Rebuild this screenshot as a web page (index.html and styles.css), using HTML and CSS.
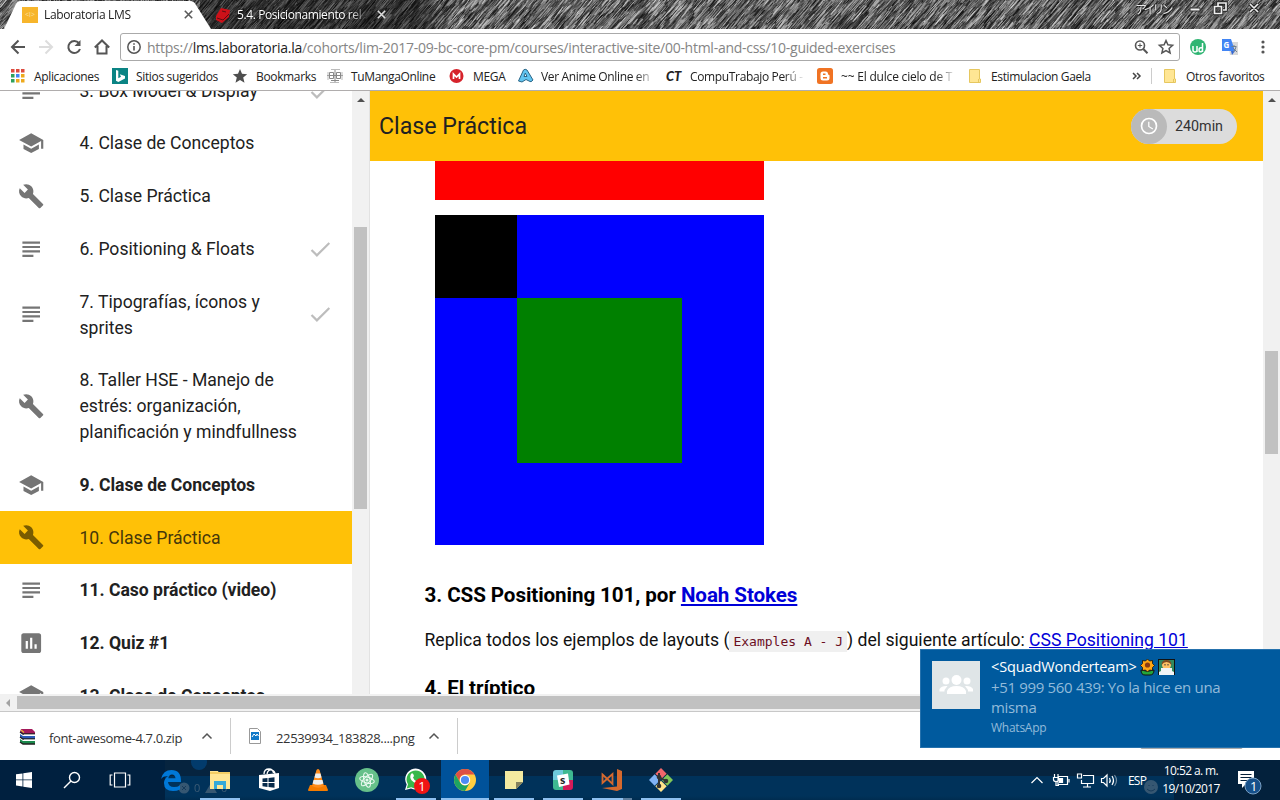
FILE: index.html
```html
<!DOCTYPE html>
<html lang="es">
<head>
<meta charset="utf-8">
<title>Laboratoria LMS</title>
<link rel="stylesheet" href="styles.css">
</head>
<body>
<svg class="defs" width="0" height="0">
  <symbol id="school" viewBox="0 0 24 24"><path d="M5 13.180v4L12 21l7-3.820v-4L12 17l-7-3.820zM12 3L1 9l11 6 9-4.910V17h2V9L12 3z"/></symbol>
  <symbol id="build" viewBox="0 0 24 24"><path d="M22.700 19l-9.100-9.100c.9-2.300.4-5-1.500-6.900-2-2-5-2.400-7.400-1.300L9 6 6 9 1.600 4.700C.4 7.100.9 10.100 2.900 12.100c1.900 1.900 4.600 2.400 6.900 1.500l9.100 9.100c.4.4 1 .4 1.400 0l2.300-2.300c.5-.4.5-1.100.1-1.400z"/></symbol>
  <symbol id="subject" viewBox="0 0 24 24"><path d="M14 17H4v2h10v-2zm6-8H4v2h16V9zM4 15h16v-2H4v2zM4 5v2h16V5H4z"/></symbol>
  <symbol id="poll" viewBox="0 0 24 24"><path d="M19 3H5c-1.100 0-2 .9-2 2v14c0 1.100.9 2 2 2h14c1.100 0 2-.9 2-2V5c0-1.100-.9-2-2-2zM9 17H7v-7h2v7zm4 0h-2V7h2v10zm4 0h-2v-4h2v4z"/></symbol>
  <symbol id="done" viewBox="0 0 24 24"><path d="M9 16.200L4.800 12l-1.400 1.400L9 19 21 7l-1.400-1.400L9 16.200z"/></symbol>
  <symbol id="folder" viewBox="0 0 16 16"><path d="M1.500 1.500h10v9.500h1v3.500h-11z" fill="#ffe694" stroke="#e6c75f"/><path d="M10.500 11v3.500" stroke="#e6c75f" fill="none"/></symbol>
</svg>

<header class="browser">
  <div class="tabstrip">
    <canvas class="theme" id="theme" width="1280" height="29"></canvas>
    <div class="tabs">
      <div class="tab">
        <svg class="tabshape" width="214" height="29"><path d="M4 29L16 4q1.500-3 4-3H190q4 0 6 4L211 29z" fill="#fff"/></svg>
        <span class="fav">&lt;l&gt;</span><span class="tabtext">Laboratoria LMS</span>
        <svg class="x1" width="9" height="9"><path d="M.8.8l7.400 7.400M8.200.8L.8 8.200" stroke="#5a5a5a" stroke-width="1.600"/></svg>
      </div>
      <div class="tab second">
        <svg width="16" height="16"><path d="M1 9L6 1l9 2-1 7-7 6-6-3z" fill="#ce1119"/><path d="M2 11l6 2 6-6M7 4l4 1" stroke="#5c0d12" fill="none"/></svg>
        <span class="tabtext">5.4. Posicionamiento rel</span>
        <svg class="x2" width="9" height="9"><path d="M.8.8l7.400 7.400M8.200.8L.8 8.200" stroke="#ddd" stroke-width="1.600"/></svg>
      </div>
    </div>
    <div class="wincontrols">
      <span class="jp">アイリン</span>
      <svg width="104" height="18"><g fill="none" stroke="#777" stroke-opacity=".7"><path d="M8 0v14M33 0v14M58 0v14M102 0v14M8 14h94"/></g><path d="M14 8h10v3H14z" fill="#eee" stroke="#333"/><g fill="none" stroke="#222" stroke-width="3.500"><path d="M38.500 6.500h7v7h-7zM42 6V3h8v7h-3M74 4l8 8M82 4l-8 8"/></g><g fill="none" stroke="#eee" stroke-width="1.700"><path d="M38.500 6.500h7v7h-7zM42 6V3h8v7h-3M74 4l8 8M82 4l-8 8"/></g></svg>
    </div>
  </div>
  <div class="toolbar">
    <svg class="nav" width="118" height="34" fill="none" stroke="#555" stroke-width="2"><path d="M25 18H12M18.500 11.500L12 18l6.500 6.500"/><path d="M39 18h13M45.500 11.500L52 18l-6.500 6.500" stroke="#ddd"/><path d="M79 14.200A6 6 0 1 0 80 20"/><path d="M80.500 11v6h-6z" fill="#555" stroke="none"/><path d="M94.800 18.500L102 11.500l7.200 7M97.500 17v7.500h9V17"/></svg>
    <div class="omnibox">
      <svg width="16" height="16"><circle cx="8" cy="8" r="6.200" fill="none" stroke="#555" stroke-width="1.500"/><path d="M7.200 7h1.600v4.500H7.200zM7.200 4.300h1.600v1.500H7.200z" fill="#555"/></svg>
      <span class="url">https://<b>lms.laboratoria.la</b>/cohorts/lim-2017-09-bc-core-pm/courses/interactive-site/00-html-and-css/10-guided-exercises</span>
      <svg class="omniicons" width="42" height="18" fill="none" stroke="#555"><circle cx="7" cy="7.500" r="4.500" stroke-width="1.600"/><path d="M10.300 11l4.200 4.200" stroke-width="2"/><path d="M4.800 7.500h4.400M7 5.300v4.400"/><path d="M33 2.500l1.900 4.300 4.700.5-3.500 3.100 1 4.600-4.100-2.400-4.100 2.400 1-4.600-3.500-3.100 4.700-.5z" stroke-width="1.500"/></svg>
    </div>
    <div class="ext">
      <svg width="18" height="18"><circle cx="9" cy="9" r="8" fill="#2fb573"/><path d="M4 8v4q0 2 2 2t2-2V8M8 12v2M13.500 5v9M13.500 10q-3.500-1-3.500 2t3.500 1" fill="none" stroke="#fff" stroke-width="1.500"/></svg>
      <svg width="18" height="18"><path d="M7 4h10v13H9z" fill="#d8d8d8"/><path d="M1 1h9l4 12H1z" fill="#4285f4"/><path d="M10 13h4l-3 4z" fill="#3367d6"/><text x="2.500" y="10" class="gt">G</text><path d="M10.500 8.500h5M13 7v1.500M15 9q-1 4-3 5M12 10l4 4" stroke="#6f7f8f" fill="none"/></svg>
      <svg width="6" height="16" fill="#555"><circle cx="3" cy="3" r="1.600"/><circle cx="3" cy="8" r="1.600"/><circle cx="3" cy="13" r="1.600"/></svg>
    </div>
  </div>
  <nav class="bookmarks">
    <a><svg width="16" height="16"><path d="M1 1h3.500v3.500H1zM6 1h3.500v3.500H6zM11 1h3.500v3.500H11z" fill="#dd4b3e"/><path d="M1 6h3.500v3.500H1zM1 11h3.500v3.500H1z" fill="#2ea15c"/><path d="M6 6h3.500v3.500H6z" fill="#4285f4"/><path d="M11 6h3.500v3.500H11zM6 11h3.500v3.500H6zM11 11h3.500v3.500H11z" fill="#eda91c"/></svg><span>Aplicaciones</span></a>
    <a><svg width="16" height="16"><path d="M0 0h16v16H0z" fill="#0b8484"/><path d="M4 2l2.300.8v7.500L9 8.800 7.800 6.200 13 8v2.500L6.300 14 4 12.700z" fill="#fff"/></svg><span>Sitios sugeridos</span></a>
    <a><svg width="16" height="16"><path d="M8 1l2 4.800 5.200.4-4 3.400 1.300 5.100L8 12l-4.500 2.700 1.300-5.100-4-3.400L6 5.800z" fill="#4e4e4e"/></svg><span>Bookmarks</span></a>
    <a><svg width="16" height="16" fill="none" stroke="#888"><path d="M2.500 4.500h4v6h-4zM9.500 4.500h4v6h-4zM8 1v13M0 7.500h16M4 12.500h8" /><path d="M4 1.500h9M3 14.500h9M1 4v8M15 4v8" stroke="#bbb"/></svg><span>TuMangaOnline</span></a>
    <a><svg width="16" height="16"><circle cx="7.500" cy="8" r="7" fill="#d6232b"/><path d="M4.500 11V6l3 3 3-3v5" fill="none" stroke="#fff" stroke-width="1.700"/></svg><span>MEGA</span></a>
    <a><svg width="16" height="16"><path d="M.5 13L5.500 2q1.500-1.500 3.500 0l6 10q-2 3-4 1l-3-1.500-4 2.500z" fill="#61c4f0" stroke="#2b6687"/><path d="M6 8.500L7.300 5 9 8.500z" fill="#fff" stroke="#2b6687"/></svg><span class="fade">Ver Anime Online en</span></a>
    <a><em>CT</em><span class="fade">CompuTrabajo Perú -</span></a>
    <a><svg width="16" height="16"><rect width="16" height="16" rx="2.500" fill="#f07323"/><path d="M3.500 6q0-2.500 2.500-2.500h2.500q2.500 0 2.500 2.500.2 1 1.500 1.300v2.700q0 2.500-2.500 2.500H6q-2.500 0-2.500-2.500z" fill="#fff"/><path d="M6 6.300h2.500M6 9.700h4" stroke="#f07323" stroke-width="1.400"/></svg><span class="fade wide">~~ El dulce cielo de T</span></a>
    <a><svg width="16" height="16"><use href="#folder"/></svg><span class="near">Estimulacion Gaela</span></a>
    <a><svg class="more" width="10" height="10" fill="none" stroke="#444" stroke-width="1.500"><path d="M1 2l3 3-3 3M5 2l3 3-3 3"/></svg></a>
    <a class="others"><svg width="16" height="16"><use href="#folder"/></svg><span class="near">Otros favoritos</span></a>
  </nav>
</header>

<main class="page">
  <aside class="sidebar">
    <ul>
      <li><svg class="ic"><use href="#subject"/></svg><span>3. Box Model &amp; Display</span><svg class="ok"><use href="#done"/></svg></li>
      <li><svg class="ic"><use href="#school"/></svg><span>4. Clase de Conceptos</span></li>
      <li><svg class="ic"><use href="#build"/></svg><span>5. Clase Práctica</span></li>
      <li><svg class="ic"><use href="#subject"/></svg><span>6. Positioning &amp; Floats</span><svg class="ok"><use href="#done"/></svg></li>
      <li><svg class="ic"><use href="#subject"/></svg><span>7. Tipografías, íconos y sprites</span><svg class="ok"><use href="#done"/></svg></li>
      <li><svg class="ic"><use href="#build"/></svg><span>8. Taller HSE - Manejo de estrés: organización, planificación y mindfullness</span></li>
      <li class="todo"><svg class="ic"><use href="#school"/></svg><span>9. Clase de Conceptos</span></li>
      <li class="active"><svg class="ic"><use href="#build"/></svg><span>10. Clase Práctica</span></li>
      <li class="todo"><svg class="ic"><use href="#subject"/></svg><span>11. Caso práctico (video)</span></li>
      <li class="todo"><svg class="ic"><use href="#poll"/></svg><span>12. Quiz #1</span></li>
      <li class="todo"><svg class="ic"><use href="#school"/></svg><span>13. Clase de Conceptos</span></li>
    </ul>
    <div class="vbar left"><i class="up"></i><i class="thumb"></i></div>
  </aside>
  <section class="lesson">
    <div class="head"><h1>Clase Práctica</h1>
      <div class="chip"><span class="clock"><svg width="20" height="20" viewBox="0 0 24 24" fill="#fff"><path d="M12 2a10 10 0 1 0 0 20 10 10 0 0 0 0-20zm0 18a8 8 0 1 1 0-16 8 8 0 0 1 0 16zM12.500 7H11v6l5.200 3.200.8-1.300-4.500-2.700z"/></svg></span><span class="min">240min</span></div>
    </div>
    <div class="doc">
      <div class="red"></div>
      <div class="blue"><div class="black"></div><div class="green"></div></div>
      <h3>3. CSS Positioning 101, por <a>Noah Stokes</a></h3>
      <p>Replica todos los ejemplos de layouts (<code>Examples A - J</code>) del siguiente artículo: <a>CSS Positioning 101</a></p>
      <h3 class="last">4. El tríptico</h3>
    </div>
  </section>
  <div class="vbar right"><i class="up"></i><i class="thumb"></i></div>
</main>
<div class="hbar"><i class="lt"></i><i class="hthumb"></i></div>

<div class="shelf">
  <div class="dl"><svg width="17" height="17"><path d="M2 1h11l3 3v2H4L1 4z" fill="#a3195b"/><path d="M1 6l3 2h12v3H4L1 9z" fill="#2b5bb8"/><path d="M1 11l3 2h12v3H4l-3-2z" fill="#1b8a4c"/><path d="M1 4l3 2h12M1 9l3 2h12M1 14l3 2h12" stroke="#222" fill="none" stroke-width="1.500"/><path d="M5 7h11M5 12h11" stroke="#fff"/><path d="M2 2l3 2.500" stroke="#e2b13c" stroke-width="1.500"/></svg><span>font-awesome-4.7.0.zip</span><svg class="chev" width="12" height="8"><path d="M1.500 6.500L6 2l4.500 4.500" fill="none" stroke="#555" stroke-width="1.500"/></svg></div>
  <div class="dl png"><svg width="14" height="17"><path d="M1.500.5h8l3 3v12h-11z" fill="#fff" stroke="#999"/><path d="M3 4h8v8H3z" fill="#0f78c8"/><path d="M4 9l2-3 2 2 1-2 1.500 2" stroke="#fff" fill="none"/></svg><span>22539934_183828....png</span><svg class="chev" width="12" height="8"><path d="M1.500 6.500L6 2l4.500 4.500" fill="none" stroke="#555" stroke-width="1.500"/></svg></div>
</div>

<footer class="taskbar">
  <svg class="ghost" width="1280" height="40"><circle cx="199" cy="2" r="8" fill="#004b8a" opacity=".6"/><g fill="#637687" opacity=".55"><circle cx="184" cy="28" r="5.500"/><path d="M205 33l6-10 6 10z"/><circle cx="1151" cy="27" r="7"/></g><path d="M182 26l4 4M186 26l-4 4M1147 29q4 4 8 0M1149 25v1M1153 25v1" stroke="#173b5a" fill="none"/><text x="194" y="32" class="gh">0</text><text x="221" y="32" class="gh">0</text></svg>
  <div class="apps">
    <div class="sys"><svg width="16" height="16" fill="#fff"><path d="M0 2.300l6.500-.9v6.100H0zM7.300 1.300L16 0v7.500H7.300zM0 8.300h6.500v6.200L0 13.600zM7.300 8.300H16V16l-8.700-1.300z"/></svg></div>
    <div class="sys"><svg width="18" height="18" fill="none" stroke="#fff" stroke-width="1.400"><circle cx="11.500" cy="6.500" r="5"/><path d="M8 10l-7 7"/></svg></div>
    <div class="sys"><svg width="22" height="16" fill="none" stroke="#fff" stroke-width="1.200"><path d="M5.500 1h11v14h-11zM3.500 3H1.200v10h2.300M18.500 3h2.300v10h-2.300"/></svg></div>
    <div class="app first"><svg width="22" height="22" viewBox="0 0 22 22"><path d="M1 10Q3 1 11.500 1 21 1 21 12v1H8q.5 5 6 5 3.500 0 6-1.500v4Q17 22 13 22 4 22 4 14q0-4 4-7-5 0-7 3zm7.300-.8h7.200Q15 5.500 12 5.500q-3 0-3.700 3.700z" fill="#0078d7"/></svg></div>
    <div class="app open"><svg width="22" height="20"><path d="M1 1h8l1 2h11v16H1z" fill="#ffe694"/><path d="M1 2h20v2H1z" fill="#f3ce65"/><path d="M5 11h12v8h-3v-4H8v4H5z" fill="#35a9d8"/></svg></div>
    <div class="app"><svg width="24" height="24"><path d="M2 7l20-2v15l-9 3-11-3z" fill="#fff"/><path d="M7 6q0-5 5-5 4 0 4.500 4M10 6q1-5 5-4 3 1 3 4" fill="none" stroke="#fff" stroke-width="1.300"/><path d="M5.500 10.500l5-.5v4h-5zM11.500 9.900l6-.6V14h-6zM5.500 15h5v4l-5-.8zM11.500 15h6v4.800l-6-.7z" fill="#062a4b"/></svg></div>
    <div class="app"><svg width="22" height="24"><path d="M3 17h16l2 5q0 1-1 1H2q-1 0-1-1z" fill="#f57c00"/><path d="M11 1q1.300 0 1.700 1.500L17 18q-6 3.500-12 0L9.300 2.500Q9.700 1 11 1z" fill="#ff8c1a"/><path d="M8.500 5.500h5l1 4q-3.500 1.500-7 0zM6.600 12h8.800l1 3.500q-5.400 2.500-10.800 0z" fill="#eee"/></svg></div>
    <div class="app"><svg width="24" height="24" fill="none" stroke="#e9f8ef" stroke-width="1.100"><circle cx="12" cy="12" r="12" fill="#66c08a" stroke="none"/><ellipse cx="12" cy="12" rx="7.500" ry="3" transform="rotate(15 12 12)"/><ellipse cx="12" cy="12" rx="7.500" ry="3" transform="rotate(75 12 12)"/><ellipse cx="12" cy="12" rx="7.500" ry="3" transform="rotate(135 12 12)"/><circle cx="12" cy="12" r="1" fill="#fff"/></svg></div>
    <div class="app open"><svg width="24" height="24"><path d="M1 22l1.700-5.500A10.500 10.500 0 1 1 7 20.500z" fill="#fff"/><path d="M2.700 20.500L4 16.300a9 9 0 1 1 3.200 3z" fill="#37b84a"/><path d="M7 6q2-2 3 2l-1 1.500q1 3 4 4l1.500-1.500q4 1 2 3-2 2.500-7-1T7 6z" fill="#fff"/></svg><span class="badge">1</span></div>
    <div class="app open current"><svg width="22" height="22" viewBox="-11 -11 22 22"><circle r="11" fill="#ffcd40"/><path d="M-9.500-5.500A11 11 0 0 1 9.500-5.500H0A5.500 5.500 0 0 0-4.800 2.700z" fill="#dd5044"/><path d="M-9.500-5.500A11 11 0 0 0 0 11L4.800 2.700A5.500 5.500 0 0 1-4.800 2.700z" fill="#1da462"/><circle r="5.200" fill="#fff"/><circle r="4.100" fill="#4c8bf5"/></svg></div>
    <div class="app open"><svg width="18" height="18"><path d="M0 0h18v11l-7 7H0z" fill="#f4eaa0"/><path d="M11 11h7l-7 7z" fill="#85825d"/></svg></div>
    <div class="app open"><svg width="20" height="20"><path d="M0 3q0-3 3-3h7v10H0z" fill="#6ecadc"/><path d="M10 0h7q3 0 3 3v7H10z" fill="#3eb991"/><path d="M0 10h10v10H3q-3 0-3-3z" fill="#3eb991"/><path d="M10 10h10v7q0 3-3 3h-7z" fill="#d41b59"/><path d="M4 5.500L15 3.500l1.500 11L6 17z" fill="#fff"/><text x="7" y="14" class="sl">s</text></svg></div>
    <div class="app open split"><svg width="24" height="24" fill="none"><path d="M17 1l5 2v18l-5 2L2 20l15-1.500z" fill="#d6692e"/><path d="M2.500 6.500l10 9.500V6L2.500 15z" stroke="#d6692e" stroke-width="1.800"/></svg></div>
    <div class="app open"><svg width="24" height="24" viewBox="-12 -12 24 24"><g transform="rotate(45)"><path d="M-8.500-8.500h8v8h-8z" fill="#f1676b"/><path d="M.5-8.500h8v8h-8z" fill="#80c758"/><path d="M.5.5h8v8h-8z" fill="#ffe48b"/><path d="M-8.500.5h8v8h-8z" fill="#81b3f5"/></g><path d="M-2-7v13M-2-3L5 1" stroke="#333" stroke-width="2" fill="none"/><circle cx="-2" cy="-3" r="2.300" fill="#333"/><circle cx="-2" cy="6" r="2.300" fill="#333"/><circle cx="5" cy="1" r="2.300" fill="#333"/></svg></div>
  </div>
  <div class="tray">
    <svg width="88" height="20" fill="none" stroke="#fff" stroke-width="1.200"><path d="M1.500 13L7 7.500l5.500 5.500"/><path d="M28 6.500h9.500v8H28zM39 9v3.500M24.500 4v3M28 4v3M23.500 7.500h5v2q0 2-2.500 2t-2.500-2zM26 11.500v4h3"/><path d="M29.500 8.500h3v4h-3z" fill="#fff"/><path d="M53 5.500h10.500v8H51.500V10M57.500 14v3M53 17h8"/><path d="M47.500 4h4v4h-4z"/><path d="M71.500 8.500h2L77 5v11l-3.500-3.500h-2zM79.500 8q1.500 2.500 0 5M82 6q3 4.500 0 9"/><path d="M84.500 5q4 5.500 0 11" stroke-opacity=".45"/></svg>
    <span class="lang">ESP</span>
    <div class="time"><span>10:52 a. m.</span><span>19/10/2017</span></div>
    <div class="note"><svg width="26" height="26"><path d="M1 1h16v13H9l-4 4v-4H1z" fill="#fff"/><path d="M3.500 4.500h11M3.500 7.500h11M3.500 10.500h8" stroke="#05213b" stroke-width="1.200"/><circle cx="16" cy="16" r="8" fill="#16508a" stroke="#7aa0c4"/><text x="13" y="21" class="nt">1</text></svg></div>
  </div>
</footer>

<div class="allbtn"></div>
<div class="toast">
  <svg width="48" height="48"><path d="M0 0h48v48H0z" fill="#dfe5e7"/><g fill="#fff"><circle cx="24.500" cy="19" r="5"/><path d="M15 33v-3q2-5 9.500-5t9.500 5v3z"/><circle cx="14" cy="20" r="3.500"/><circle cx="35" cy="20" r="3.500"/><path d="M7.500 30.500V28q2-3.500 8-3l-3 4v1.500zM41 30.500V28q-2-3.500-8-3l3 4v1.500z"/></g></svg>
  <div class="msg">
    <div class="who"><span>&lt;SquadWonderteam&gt;</span><svg width="36" height="18"><path d="M1 11l5 1h3l5-1q0 5-4 5H5q-4 0-4-5z" fill="#25a43a" stroke="#111"/><path d="M7.500 0l2 2 3-.5v3l2 2-2 2v3l-3-.5-2 2-2-2-3 .5v-3l-2-2 2-2v-3l3 .5z" fill="#ffa514" stroke="#111" stroke-width=".8"/><circle cx="7.500" cy="6" r="2.600" fill="#8a3a14"/><rect x="18.500" y=".5" width="16" height="15" fill="#2f8a60" stroke="#111"/><circle cx="26.500" cy="6" r="4.500" fill="#ffc063"/><path d="M21.500 6q0-5 5-5t5 5q-2-3-5-3t-5 3z" fill="#7d4a20"/><path d="M25 5v1.500M28 5v1.500" stroke="#333"/><path d="M21 9h11v3l2 1v3H19v-3l2-1z" fill="#f1f3f5"/></svg></div>
    <div class="body">+51 999 560 439: Yo la hice en una misma</div>
    <div class="src">WhatsApp</div>
  </div>
</div>
<script src="theme.js"></script>
</body>
</html>
```
FILE: styles.css
```css
* { box-sizing: border-box; }
body { margin: 0; width: 1280px; height: 800px; overflow: hidden; background: #fff; position: relative; font-family: "Open Sans", "Noto Sans", sans-serif; display: flex; flex-direction: column; }
svg { display: block; flex: none; }
.defs { position: absolute; }
.browser { height: 91px; flex: none; border-bottom: 1px solid #b0adad; background: #fff; }
.tabstrip { height: 29px; position: relative; display: flex; justify-content: space-between; }
.theme { position: absolute; left: 0; top: 0; }
.tabs { display: flex; position: relative; }
.tab { position: relative; width: 211px; height: 29px; display: flex; align-items: center; padding-left: 22px; font-size: 12px; color: #222; }
.tabshape { position: absolute; left: 0; top: 0; }
.fav { position: relative; width: 16px; height: 16px; background: #f7b52b; color: #fbe0a0; font-size: 7px; line-height: 15px; text-align: center; margin-right: 6px; }
.tabtext { position: relative; letter-spacing: -0.35px; white-space: nowrap; width: 138px; }
.tab .x1 { position: relative; margin-left: 2px; }
.second { padding-left: 4px; color: #fff; width: 190px; }
.second .tabtext { margin-left: 6px; width: 130px; letter-spacing: -0.4px; text-shadow: 0 0 2px #000; -webkit-mask: linear-gradient(90deg, #000 86%, transparent 102%); mask: linear-gradient(90deg, #000 86%, transparent 102%); }
.second .x2 { margin-left: 10px; }
.wincontrols { position: relative; display: flex; }
.jp { font: 12px/18px "Noto Sans CJK JP", sans-serif; color: #e8e8e8; text-shadow: 0 0 2px #000, 0 0 2px #000; letter-spacing: -3px; margin-right: 3px; width: 38px; white-space: nowrap; }
.toolbar { height: 34px; display: flex; align-items: flex-start; }
.omnibox { margin: 4px 0 0 2px; width: 1060px; height: 28px; border: 1px solid #aaa; border-radius: 3px; display: flex; align-items: center; padding-left: 5px; }
.url { width: 996px; padding-left: 5px; font-size: 14px; letter-spacing: -0.265px; color: #858585; white-space: nowrap; }
.url b { font-weight: 400; color: #222; }
.omniicons { margin-left: -5px; }
.ext { display: flex; align-items: center; height: 36px; padding-left: 9px; }
.ext svg + svg { margin-left: 14px; }
.ext svg:last-child { margin-left: 21px; }
.gt { font: bold 8px "Open Sans", sans-serif; fill: #fff; }
.bookmarks { height: 26px; padding-left: 10px; display: grid; grid-template-columns: 102px 120px 95px 122px 69px 148px 151px 151px 164px 19px 128px; align-items: center; font-size: 12px; color: #222; }
.bookmarks a { display: flex; align-items: center; height: 26px; }
.bookmarks span { margin-left: 8px; white-space: nowrap; letter-spacing: -0.35px; }
.bookmarks .near { margin-left: 7px; }
.bookmarks em { width: 17px; font: italic 900 13px "Lato", sans-serif; }
.bookmarks .fade { width: 115px; overflow: hidden; margin-left: 7px; -webkit-mask: linear-gradient(90deg, #000 82%, transparent); mask: linear-gradient(90deg, #000 82%, transparent); }
.bookmarks .wide { margin-left: 8px; letter-spacing: -0.2px; }
.bookmarks .others { height: 16px; border-left: 1px solid #ccc; padding-left: 11px; }

.page { height: 603px; flex: none; display: flex; overflow: hidden; font-family: Roboto, sans-serif; }
.sidebar { width: 370px; display: flex; border-right: 1px solid #e2e2e2; }
.sidebar ul { width: 352px; margin: -26.600px 0 0; padding: 0; list-style: none; }
.sidebar li { display: flex; align-items: center; padding: 13.350px 0 13.350px 17.500px; font-size: 17.600px; line-height: 26px; color: #212121; }
.sidebar li span { width: 230px; margin-left: 35.600px; }
.ic { width: 26.400px; height: 26.400px; margin: -1px 0; fill: #757575; }
.ok { width: 26.400px; height: 26.400px; fill: #bdbdbd; margin: -1px 0 -1px -2px; }
.todo { font-weight: 700; }
.todo span { letter-spacing: -0.04px; }
.sidebar .active { background: #ffc107; color: #46370b; }
.active .ic { fill: #7a5c00; }
.vbar { width: 17px; background: #f1f1f1; flex: none; padding-top: 7px; }
.vbar i { display: block; }
.up { width: 0; height: 0; margin: 0 auto; border: 4px solid transparent; border-top: 0; border-bottom-color: #505050; }
.thumb { width: 13px; margin: 0 auto; background: #c1c1c1; }
.left .thumb { margin-top: 125px; height: 282px; }
.right .thumb { margin-top: 249px; height: 103px; }
.lesson { width: 893px; background: #fff; }
.head { height: 70px; background: #ffc107; display: flex; align-items: center; justify-content: space-between; padding: 0 26px 0 9px; }
h1 { margin: 0; font-size: 23.200px; font-weight: 400; color: #212121; }
.chip { width: 106px; height: 35px; border-radius: 18px; background: #dcdcdc; display: flex; align-items: center; }
.clock { width: 36px; height: 35px; border-radius: 18px; background: #bababa; display: flex; align-items: center; justify-content: center; }
.min { margin-left: 8px; font-size: 14.300px; color: #333; }
.doc { padding-left: 54.500px; color: #111; }
.red { width: 329px; height: 38.500px; margin-left: 10.500px; background: red; }
.blue { width: 329px; height: 330px; margin: 15.500px 0 0 10.500px; background: blue; display: grid; grid-template-columns: 82.300px 164.700px; grid-template-rows: 82.600px 165px; }
.black { background: #000; }
.green { grid-area: 2 / 2; background: green; }
h3 { margin: 36px 0 0; font-size: 20.600px; line-height: 28px; font-weight: 700; letter-spacing: -0.08px; color: #000; }
.doc p { margin: 17px 0 0; font-size: 17.600px; line-height: 28px; white-space: nowrap; }
.doc a { color: #0000d8; text-decoration: underline; }
code { font: 13px "DejaVu Sans Mono", monospace; color: #6b0f1f; background: #f0f0f0; padding: 3px 4px; }
h3.last { margin-top: 20px; }
.hbar { height: 17px; flex: none; background: #f1f1f1; display: flex; align-items: center; }
.lt { border: 4px solid transparent; border-left: 0; border-right-color: #a3a3a3; margin: 0 7px 0 6px; width: 4px; }
.hthumb { height: 13px; flex: 1; background: #c1c1c1; }
.shelf { height: 49px; flex: none; background: #fff; border-top: 1px solid #c8c8c8; display: flex; align-items: center; font-size: 13px; color: #333; }
.dl { width: 231px; height: 36px; display: flex; align-items: center; padding-left: 19px; border-right: 1px solid #ccc; }
.dl span { width: 146px; margin: 3px 6px 0 13px; letter-spacing: -0.36px; white-space: nowrap; }
.dl.png { width: 227px; padding-left: 17px; }
.dl.png span { margin-left: 14px; }

.taskbar { height: 40px; flex: none; position: relative; display: flex; justify-content: space-between; color: #fff; background: linear-gradient(90deg, #00203f 165px, transparent 165px 1174px, #03213c 1174px), linear-gradient(#06243f 16px, #00325a 16px 36px, #002c50 40px); }
.apps { display: flex; position: relative; }
.sys, .app { width: 48px; height: 40px; display: flex; align-items: center; justify-content: center; position: relative; }
.app { margin-right: 1px; }
.first { margin-left: 3px; }
.open::after { content: ""; position: absolute; left: 4px; right: 4px; bottom: 0; height: 2px; background: #8ec0f0; }
.current { background: #00529a; }
.current::after { left: 0; right: 0; }
.split::after { background: linear-gradient(90deg, #8ec0f0 31px, #5d7e9e 31px); }
.badge { position: absolute; left: 22px; top: 18px; width: 16px; height: 16px; border-radius: 8px; background: #f01414; font-size: 13px; line-height: 16px; text-align: center; }
.sl { font: 900 12px "Lato", sans-serif; fill: #222; }
.tray { display: flex; align-items: center; position: relative; width: 250px; }
.lang { font-size: 12px; width: 31px; margin-left: 10px; letter-spacing: -0.8px; }
.time { width: 64px; display: flex; flex-direction: column; align-items: center; font-size: 12px; line-height: 18px; letter-spacing: -0.6px; white-space: nowrap; }
.note { margin: 5px 0 0 14px; }
.nt { font: 13px "Open Sans", sans-serif; fill: #fff; }
.ghost { position: absolute; left: 0; top: 0; }
.gh { font: 11px "Open Sans", sans-serif; fill: #637687; opacity: .6; }
.allbtn { position: absolute; left: 1140px; top: 728px; width: 103px; height: 21px; border: 1px solid #aaa; border-radius: 2px; }
.toast { position: absolute; left: 920px; top: 649px; width: 360px; height: 99px; background: #005a9e; border: 1px solid #2672ad; border-right: 0; padding: 11px; display: flex; }
.msg { margin: -4px 0 0 11px; width: 250px; line-height: 20px; font-size: 15px; color: #92bbda; }
.who { display: flex; color: #fff; font-size: 14.500px; }
.who span { width: 149px; letter-spacing: -0.13px; }
.who svg { margin-top: 2px; }
.body { letter-spacing: -0.33px; }
.src { font-size: 12px; line-height: 22px; letter-spacing: -0.25px; }
```
FILE: theme.js
```js
// Diagonal pencil hatching for the browser theme
const canvas = document.getElementById("theme");
const ctx = canvas.getContext("2d");
let seed = 71;
function rnd() {
  seed = (seed * 16807) % 2147483647;
  return seed / 2147483647;
}
ctx.fillStyle = "#555";
ctx.fillRect(0, 0, 1280, 29);
for (let i = 0; i < 13000; i++) {
  const x = rnd() * 1320 - 20;
  const y = rnd() * 46 - 5;
  const len = 4 + rnd() * 11;
  const slope = 0.78 + rnd() * 0.12;
  const tone = rnd() < 0.5 ? rnd() * 60 : 130 + rnd() * 110;
  ctx.strokeStyle = `rgba(${tone},${tone},${tone},0.65)`;
  ctx.lineWidth = 0.5 + rnd() * 0.7;
  ctx.beginPath();
  ctx.moveTo(x, y);
  ctx.lineTo(x + len * slope, y - len);
  ctx.stroke();
}
const shade = ctx.createLinearGradient(200, 0, 450, 0);
shade.addColorStop(0, "rgba(0,0,0,0.5)");
shade.addColorStop(0.9, "rgba(0,0,0,0.45)");
shade.addColorStop(1, "rgba(0,0,0,0)");
ctx.fillStyle = shade;
ctx.fillRect(200, 0, 250, 29);
```
